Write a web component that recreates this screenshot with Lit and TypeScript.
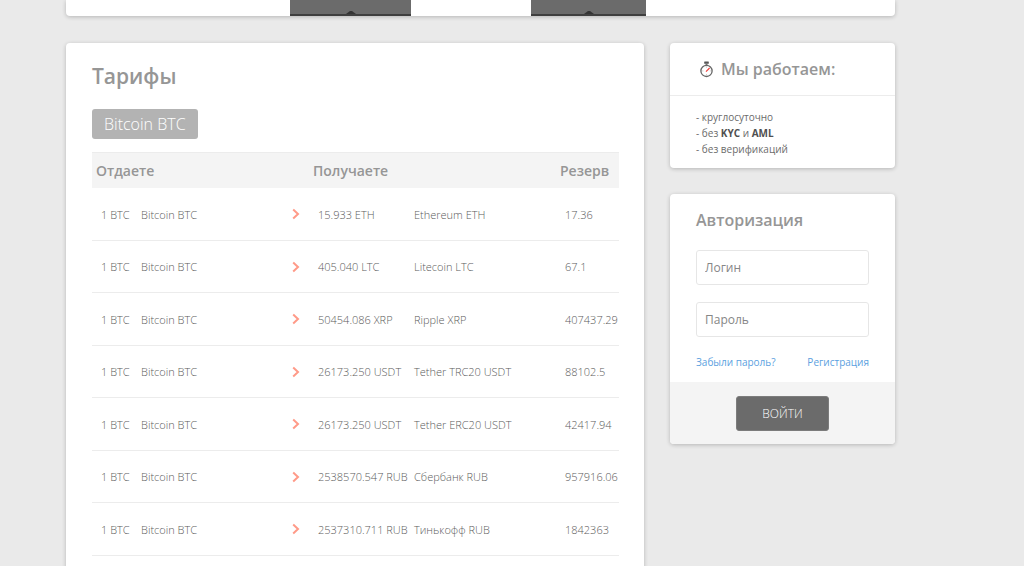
import { LitElement, html, css } from "lit";
import { customElement } from "lit/decorators.js";

interface Rate {
  amount: string;
  name: string;
  reserve: string;
}

const RATES: Rate[] = [
  { amount: "15.933 ETH", name: "Ethereum ETH", reserve: "17.36" },
  { amount: "405.040 LTC", name: "Litecoin LTC", reserve: "67.1" },
  { amount: "50454.086 XRP", name: "Ripple XRP", reserve: "407437.29" },
  { amount: "26173.250 USDT", name: "Tether TRC20 USDT", reserve: "88102.5" },
  { amount: "26173.250 USDT", name: "Tether ERC20 USDT", reserve: "42417.94" },
  { amount: "2538570.547 RUB", name: "Сбербанк RUB", reserve: "957916.06" },
  { amount: "2537310.711 RUB", name: "Тинькофф RUB", reserve: "1842363" },
];

const reset = css`
  *,
  *::before {
    box-sizing: border-box;
  }
  h1,
  h2,
  p {
    margin: 0;
    font-weight: 600;
    color: #969696;
  }
  button,
  input {
    font-family: inherit;
    margin: 0;
  }
`;

const card = css`
  .card {
    background: #fff;
    border-radius: 4px;
    box-shadow: 0 1px 4px rgba(0, 0, 0, 0.22);
  }
`;

@customElement("top-strip")
export class TopStrip extends LitElement {
  static styles = [
    reset,
    card,
    css`
      :host {
        display: block;
      }
      .strip {
        display: flex;
        gap: 120px;
        height: 16px;
        padding-left: 224px;
        border-top-left-radius: 0;
        border-top-right-radius: 0;
      }
      .tab {
        display: flex;
        align-items: flex-end;
        justify-content: center;
        width: 121px;
        background: #6b6b6b;
        border-bottom: 2px solid #3f3f3f;
      }
      .tab + .tab {
        width: 115px;
      }
      svg {
        display: block;
      }
    `,
  ];

  render() {
    const caret = html`<svg width="10" height="3" viewBox="0 0 10 3">
      <path d="M0 3 L4 0 H6 L10 3Z" fill="#333" />
    </svg>`;
    return html`<div class="card strip">
      <div class="tab">${caret}</div>
      <div class="tab">${caret}</div>
    </div>`;
  }
}

@customElement("rates-card")
export class RatesCard extends LitElement {
  static styles = [
    reset,
    card,
    css`
      :host {
        display: block;
      }
      .card {
        padding: 16px 25px 26px 26px;
      }
      h1 {
        font-size: 21px;
        line-height: 34px;
      }
      .currency {
        display: block;
        height: 30px;
        margin: 16px 0 13px;
        padding: 0 12px;
        border: 0;
        border-radius: 3px;
        background: #b3b3b3;
        color: #fff;
        font-size: 16px;
        font-weight: 300;
        line-height: 30px;
      }
      table {
        width: 100%;
        table-layout: fixed;
        border-collapse: separate;
        border-spacing: 0;
      }
      .c-give {
        width: 40px;
      }
      .c-arrow {
        width: 26px;
      }
      .c-get {
        width: 96px;
      }
      .c-reserve {
        width: 63px;
      }
      th {
        height: 36px;
        padding: 0 0 0 4px;
        background: #f4f4f4;
        border-top: 1px solid #ececec;
        color: #969696;
        font-size: 14px;
        font-weight: 600;
        text-align: left;
      }
      td {
        height: 52px;
        padding: 0 0 0 9px;
        border-bottom: 1px solid #ececec;
        color: #5c5c5c;
        font-size: 11px;
        font-weight: 300;
        white-space: nowrap;
      }
      tr:nth-child(odd) td {
        height: 53px;
      }
      td svg {
        display: block;
      }
    `,
  ];

  render() {
    return html`<section class="card">
      <h1>Тарифы</h1>
      <button class="currency" type="button">Bitcoin BTC</button>
      <table>
        <colgroup>
          <col class="c-give" />
          <col />
          <col class="c-arrow" />
          <col class="c-get" />
          <col />
          <col class="c-reserve" />
        </colgroup>
        <thead>
          <tr>
            <th colspan="3">Отдаете</th>
            <th colspan="2">Получаете</th>
            <th>Резерв</th>
          </tr>
        </thead>
        <tbody>
          ${RATES.map(
            (r) => html`<tr>
              <td>1 BTC</td>
              <td>Bitcoin BTC</td>
              <td>
                <svg width="8" height="12" viewBox="0 0 8 12">
                  <path d="M1.2 1.6 L6 6 L1.2 10.4" fill="none" stroke="#ff9a88" stroke-width="2" />
                </svg>
              </td>
              <td>${r.amount}</td>
              <td>${r.name}</td>
              <td>${r.reserve}</td>
            </tr>`
          )}
        </tbody>
      </table>
    </section>`;
  }
}

@customElement("hours-card")
export class HoursCard extends LitElement {
  static styles = [
    reset,
    card,
    css`
      :host {
        display: block;
      }
      header {
        display: flex;
        align-items: center;
        gap: 7px;
        height: 53px;
        padding: 0 29px;
        border-bottom: 1px solid #ececec;
      }
      h2 {
        font-size: 16px;
        line-height: 24px;
      }
      .text {
        padding: 13px 26px 11px;
        color: #6b6b6b;
        font-size: 10px;
        font-weight: 400;
        line-height: 16px;
      }
      b {
        color: #505050;
        font-weight: 700;
      }
    `,
  ];

  render() {
    return html`<section class="card">
      <header>
        <svg width="15" height="18" viewBox="0 0 15 18">
          <rect x="5.2" y="1.6" width="4.6" height="2.2" rx="0.5" fill="#555" />
          <rect x="6.5" y="3.3" width="2" height="2" fill="#777" />
          <circle cx="7.5" cy="10.9" r="5.6" fill="#fff" stroke="#666" stroke-width="1.3" />
          <path d="M7.5 6.5V7.7 M3.2 10.9H4.4 M10.8 10.9H11.8 M7.5 14.1V15.3" stroke="#bbb" stroke-width="0.8" />
          <path d="M7 11.6 L10.6 8" stroke="#f0403c" stroke-width="1.2" />
        </svg>
        <h2>Мы работаем:</h2>
      </header>
      <p class="text">
        - круглосуточно<br />- без <b>KYC</b> и <b>AML</b><br />- без верификаций
      </p>
    </section>`;
  }
}

@customElement("login-card")
export class LoginCard extends LitElement {
  static styles = [
    reset,
    card,
    css`
      :host {
        display: block;
      }
      .card {
        overflow: hidden;
      }
      .body {
        padding: 13px 26px 12px;
      }
      h2 {
        margin-bottom: 17px;
        font-size: 16px;
        line-height: 26px;
      }
      input {
        display: block;
        width: 100%;
        height: 35px;
        margin-bottom: 17px;
        padding: 0 8px;
        border: 1px solid #e6e6e6;
        border-radius: 3px;
        background: #fff;
        color: #6b6b6b;
        font-size: 12px;
      }
      input::placeholder {
        color: #868686;
        opacity: 1;
      }
      .links {
        display: flex;
        justify-content: space-between;
        font-size: 10px;
        line-height: 16px;
      }
      a {
        color: #5b9fe0;
        text-decoration: none;
      }
      footer {
        display: flex;
        justify-content: center;
        padding: 14px 0 13px;
        background: #f4f4f4;
      }
      footer button {
        height: 35px;
        padding: 0 25px;
        border: 1px solid #7c7c7c;
        border-radius: 3px;
        background: #6b6b6b;
        color: #fff;
        font-size: 12px;
        font-weight: 300;
      }
    `,
  ];

  render() {
    return html`<form class="card">
      <div class="body">
        <h2>Авторизация</h2>
        <input type="text" name="login" placeholder="Логин" aria-label="Логин" />
        <input type="password" name="password" placeholder="Пароль" aria-label="Пароль" />
        <div class="links">
          <a href="#">Забыли пароль?</a>
          <a href="#">Регистрация</a>
        </div>
      </div>
      <footer><button type="button">ВОЙТИ</button></footer>
    </form>`;
  }
}

@customElement("app-root")
export class AppRoot extends LitElement {
  static styles = css`
    :host {
      display: block;
      box-sizing: border-box;
      min-height: 100vh;
      padding: 0 129px 0 66px;
      background: #eaeaea;
      font-family: "Open Sans", "Noto Sans", sans-serif;
    }
    .columns {
      display: grid;
      grid-template-columns: minmax(0, 1fr) 225px;
      gap: 26px;
      align-items: start;
      margin-top: 27px;
    }
    aside {
      display: grid;
      gap: 26px;
    }
  `;

  render() {
    return html`<top-strip></top-strip>
      <div class="columns">
        <main><rates-card></rates-card></main>
        <aside>
          <hours-card></hours-card>
          <login-card></login-card>
        </aside>
      </div>`;
  }
}
